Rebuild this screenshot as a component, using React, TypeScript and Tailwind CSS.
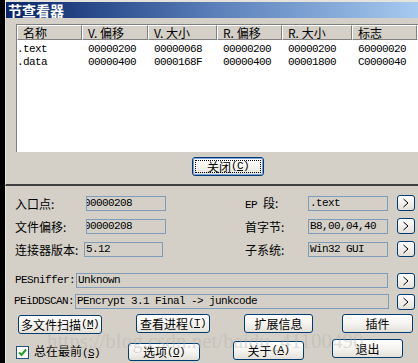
import React from "react";

const MONO = "font-['Liberation_Mono','Noto_Sans_CJK_SC',monospace] text-[11px] tracking-[-0.6px]";
const CJK = "font-['Noto_Sans_CJK_SC',sans-serif] text-[12px] leading-none";

const columns = [
  { title: "名称", w: "w-[65px]" },
  { title: "V. 偏移", w: "w-[66px]" },
  { title: "V. 大小", w: "w-[69px]" },
  { title: "R. 偏移", w: "w-[65px]" },
  { title: "R. 大小", w: "w-[70px]" },
  { title: "标志", w: "w-[65px]" },
];

const sections = [
  [".text", "00000200", "00000068", "00000200", "00000200", "60000020"],
  [".data", "00000400", "0000168F", "00000400", "00001800", "C0000040"],
];

function XpButton({
  className,
  children,
  isDefault,
}: {
  className: string;
  children: React.ReactNode;
  isDefault?: boolean;
}) {
  return (
    <div
      className={`flex items-center justify-center rounded-[3px] border border-[#003c74] bg-gradient-to-b from-white via-[#f5f4f0] to-[#e3e1d8] text-black ${CJK} ${className}`}
    >
      {isDefault ? (
        <div className="flex h-full w-full items-center justify-center rounded-[2px] border border-[#7aa0d8] p-[1px]">
          <div className="flex h-full w-full items-center justify-center border border-dotted border-black">
            {children}
          </div>
        </div>
      ) : (
        children
      )}
    </div>
  );
}

function ArrowBtn({ className }: { className?: string }) {
  return (
    <div
      className={`flex h-[16px] w-[18px] shrink-0 items-center justify-center rounded-[3px] border border-[#003c74] bg-gradient-to-b from-white to-[#e3e1d8] ${className ?? ""}`}
    >
      <svg width="8" height="10" viewBox="0 0 8 10">
        <polyline points="1.5,1 6,5 1.5,9" fill="none" stroke="#000" strokeWidth="1" />
      </svg>
    </div>
  );
}

function Field({ className, value, shift }: { className: string; value: string; shift?: boolean }) {
  return (
    <div
      className={`flex h-[15px] shrink-0 items-center overflow-hidden whitespace-nowrap border border-[#7f9db9] bg-[#d4d0c8] text-black ${MONO} ${className}`}
    >
      <span className={shift ? "-ml-[3px]" : "ml-[1px]"}>{value}</span>
    </div>
  );
}

function Mn({ k }: { k: string }) {
  return (
    <span className={MONO}>
      (<span className="underline">{k}</span>)
    </span>
  );
}

export default function App() {
  return (
    <div className="relative h-[363px] w-[418px] overflow-hidden bg-black select-none">
      {/* section viewer */}
      <div className="ml-[5px] flex h-[186px] flex-col border-l border-t-2 border-[#e6e3dc] border-b-2 border-b-[#404040] bg-[#d4d0c8]">
        <div className="flex h-[16px] items-center bg-gradient-to-r from-[#0a246a] via-[#5a7eb8] to-[#a6caf0] pl-[2px]">
          <span className="font-['Noto_Sans_CJK_SC',sans-serif] text-[14px] font-bold leading-none text-white">
            节查看器
          </span>
        </div>

        <div className="ml-[10px] mt-[6px] flex h-[128px] flex-col overflow-hidden border-l border-t border-[#808080] bg-white">
          <div className="flex h-[15px] shrink-0">
            {columns.map((c) => (
              <div
                key={c.title}
                className={`${c.w} flex shrink-0 items-center border-l border-t border-white border-r border-b border-r-[#808080] border-b-[#808080] bg-[#d4d0c8] pl-[5px] ${CJK}`}
              >
                {c.title}
              </div>
            ))}
            <div className="flex-1 border-l border-t border-white border-b border-b-[#808080] bg-[#d4d0c8]" />
          </div>
          <div className="mt-[3px] flex flex-col">
            {sections.map((row) => (
              <div key={row[0]} className="flex h-[13px] items-center">
                {row.map((cell, i) => (
                  <div
                    key={i}
                    className={`${columns[i].w} shrink-0 ${i === 0 ? "pl-[0px]" : "pl-[6px]"} ${MONO} text-black`}
                  >
                    {cell}
                  </div>
                ))}
              </div>
            ))}
          </div>
        </div>

        <div className="ml-[186px] mt-[5px]">
          <XpButton className="h-[19px] w-[72px]" isDefault>
            关闭<Mn k="C" />
          </XpButton>
        </div>
      </div>

      {/* PEiD main window */}
      <div className="ml-[5px] flex h-[177px] flex-col border-l border-[#e6e3dc] bg-[#d4d0c8] pt-[10px] text-black">
        {[
          ["入口点:", "00000208", "EP 段:", ".text", "w-[71px]", "w-[80px]", true],
          ["文件偏移:", "00000208", "首字节:", "B8,00,04,40", "w-[71px]", "w-[80px]", true],
          ["连接器版本:", "5.12", "子系统:", "Win32 GUI", "w-[69px]", "w-[79px]", false],
        ].map(([l1, v1, l2, v2, lw, fw, sh], idx) => (
          <div key={idx} className={`flex h-[15px] items-center pl-[9px] ${idx > 0 ? "mt-[8px]" : ""}`}>
            <div className={`${lw} shrink-0 ${CJK}`}>{l1 as string}</div>
            <Field className={fw as string} value={v1 as string} shift={sh as boolean} />
            <div className={`${idx === 2 ? "ml-[82px]" : "ml-[79px]"} w-[63px] shrink-0 ${CJK}`}>
              {(l2 as string).startsWith("EP") ? (
                <>
                  <span className={MONO}>EP </span>段:
                </>
              ) : (
                l2
              )}
            </div>
            <Field className="w-[80px]" value={v2 as string} />
            <ArrowBtn className="ml-[9px] -mt-[2px]" />
          </div>
        ))}

        <div className="mt-[16px] flex h-[15px] items-center pl-[9px]">
          <div className={`w-[61px] shrink-0 ${MONO}`}>PESniffer:</div>
          <Field className="w-[312px]" value="Unknown" />
          <ArrowBtn className="ml-[9px]" />
        </div>
        <div className="mt-[6px] flex h-[15px] items-center pl-[8px]">
          <div className={`w-[61px] shrink-0 ${MONO}`}>PEiDDSCAN:</div>
          <Field className="w-[314px]" value="PEncrypt 3.1 Final -> junkcode" />
          <ArrowBtn className="ml-[8px]" />
        </div>

        <div className="mt-[5px] flex items-start pl-[12px]">
          <XpButton className="mt-[1px] h-[19px] w-[84px]">
            多文件扫描<Mn k="M" />
          </XpButton>
          <XpButton className="ml-[34px] h-[19px] w-[74px]">
            查看进程<Mn k="T" />
          </XpButton>
          <XpButton className="ml-[34px] h-[19px] w-[69px]">扩展信息</XpButton>
          <XpButton className="ml-[29px] h-[19px] w-[71px]">插件</XpButton>
        </div>

        <div className="mt-[5px] flex items-start pl-[10px]">
          <div className="mt-[6px] flex items-center">
            <div className="flex h-[13px] w-[13px] items-center justify-center border border-[#1c5180] bg-white">
              <svg width="9" height="9" viewBox="0 0 9 9">
                <polyline points="1,4.5 3.5,7 8,1.5" fill="none" stroke="#21a121" strokeWidth="2" />
              </svg>
            </div>
            <span className={`ml-[5px] ${CJK}`}>
              总在最前<Mn k="S" />
            </span>
          </div>
          <XpButton className="ml-[28px] mt-[4px] h-[18px] w-[72px]">
            选项<Mn k="O" />
          </XpButton>
          <XpButton className="ml-[33px] mt-[2px] h-[19px] w-[71px]">
            关于<Mn k="A" />
          </XpButton>
          <XpButton className="ml-[28px] h-[19px] w-[71px]">退出</XpButton>
        </div>
      </div>

      {/* watermark */}
      <div className="pointer-events-none absolute left-[47px] top-[331px] whitespace-nowrap font-['Liberation_Serif',serif] text-[21px] leading-none text-[#b4b0a8] opacity-40">
        https://blog.csdn.net/baidu_41100490
      </div>
    </div>
  );
}
